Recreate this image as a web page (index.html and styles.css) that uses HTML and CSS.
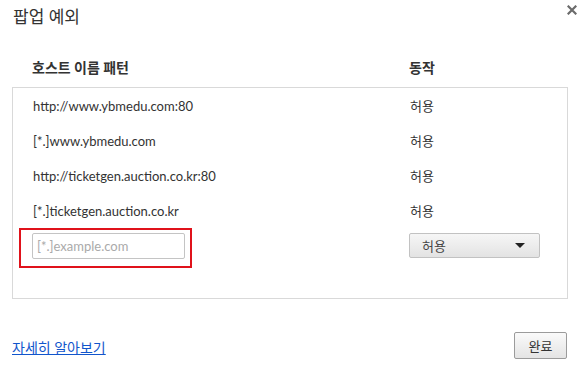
FILE: index.html
```html
<!DOCTYPE html>
<html lang="ko">
<head>
    <meta charset="UTF-8">
    <title>팝업 예외</title>
    <link rel="stylesheet" href="styles.css">
</head>
<body>

    <div class="dialog">
        <!-- Title bar -->
        <div class="title-bar">
            <h1 class="title">팝업 예외</h1>
            <svg class="close" width="10" height="10" viewBox="0 0 10 10">
                <path d="M1.5 1.5 L8.5 8.5 M8.5 1.5 L1.5 8.5" stroke="#6b6b6b" stroke-width="2.2" stroke-linecap="square"/>
            </svg>
        </div>

        <!-- Column headers -->
        <div class="col-head">
            <span class="col-pattern">호스트 이름 패턴</span>
            <span class="col-action">동작</span>
        </div>

        <!-- Exception list -->
        <div class="list">
            <div class="row">
                <span class="col-pattern">http://www.ybmedu.com:80</span>
                <span class="col-action">허용</span>
            </div>
            <div class="row">
                <span class="col-pattern">[*.]www.ybmedu.com</span>
                <span class="col-action">허용</span>
            </div>
            <div class="row">
                <span class="col-pattern">http://ticketgen.auction.co.kr:80</span>
                <span class="col-action">허용</span>
            </div>
            <div class="row">
                <span class="col-pattern">[*.]ticketgen.auction.co.kr</span>
                <span class="col-action">허용</span>
            </div>
            <div class="new-row">
                <div class="highlight">
                    <input type="text" class="pattern-input" placeholder="[*.]example.com">
                </div>
                <div class="select">
                    <span>허용</span>
                    <span class="arrow"></span>
                </div>
            </div>
        </div>

        <!-- Footer -->
        <div class="footer">
            <a href="#" class="learn-more">자세히 알아보기</a>
            <button class="done">완료</button>
        </div>
    </div>

</body>
</html>
```

FILE: styles.css
```css
body {
    margin: 0;
    background-color: #fff;
    font-family: Lato, "Noto Sans CJK KR", sans-serif;
    font-size: 13px;
    color: #333;
}
.dialog {
    width: 584px;
    height: 367px;
    box-sizing: border-box;
    padding: 0 16px 0 12px;
}
.title-bar {
    display: flex;
    justify-content: space-between;
    height: 50px;
}
.title {
    margin: 6px 0 0 1px;
    font-size: 17px;
    font-weight: normal;
    line-height: 22px;
    color: #333;
}
.close {
    margin: 5px -9px 0 0;
}
.col-head {
    display: flex;
    height: 37px;
    line-height: 36px;
    font-weight: bold;
    font-size: 14px;
    padding-left: 20px;
}
.col-pattern {
    width: 377px;
}
.list {
    border: 1px solid #d9d9d9;
    height: 210px;
}
.row {
    display: flex;
    align-items: center;
    height: 35px;
    padding-left: 20px;
    font-size: 13px;
}
.new-row {
    display: flex;
    align-items: flex-start;
    padding-left: 6px;
}
.highlight {
    border: 2px solid #e0121b;
    padding: 3px 5px 7px 11px;
    width: 153px;
}
.pattern-input {
    box-sizing: border-box;
    width: 153px;
    height: 26px;
    border: 1px solid #c4c4c4;
    border-radius: 2px;
    padding: 0 4px;
    font-family: Lato, "Noto Sans CJK KR", sans-serif;
    font-size: 13px;
    color: #333;
    outline: none;
}
.pattern-input::placeholder {
    color: #aaa;
}
.select {
    box-sizing: border-box;
    display: flex;
    align-items: center;
    justify-content: space-between;
    width: 131px;
    height: 25px;
    margin: 5px 0 0 217px;
    padding: 0 14px 0 12px;
    border: 1px solid #c2c2c2;
    border-radius: 2px;
    background: linear-gradient(#f6f6f6, #e3e3e3);
    color: #444;
}
.arrow {
    width: 0;
    height: 0;
    border-left: 5px solid transparent;
    border-right: 5px solid transparent;
    border-top: 5px solid #222;
}
.footer {
    display: flex;
    justify-content: space-between;
    align-items: center;
    margin-top: 33px;
}
.learn-more {
    color: #1155cc;
    font-size: 14px;
    margin-top: 2px;
}
.done {
    width: 53px;
    height: 27px;
    margin-right: 1px;
    border: 1px solid #9b9b9b;
    border-radius: 2px;
    background: linear-gradient(#fafafa, #e4e4e4);
    font-family: Lato, "Noto Sans CJK KR", sans-serif;
    font-size: 13px;
    color: #333;
    padding: 0;
}
```
